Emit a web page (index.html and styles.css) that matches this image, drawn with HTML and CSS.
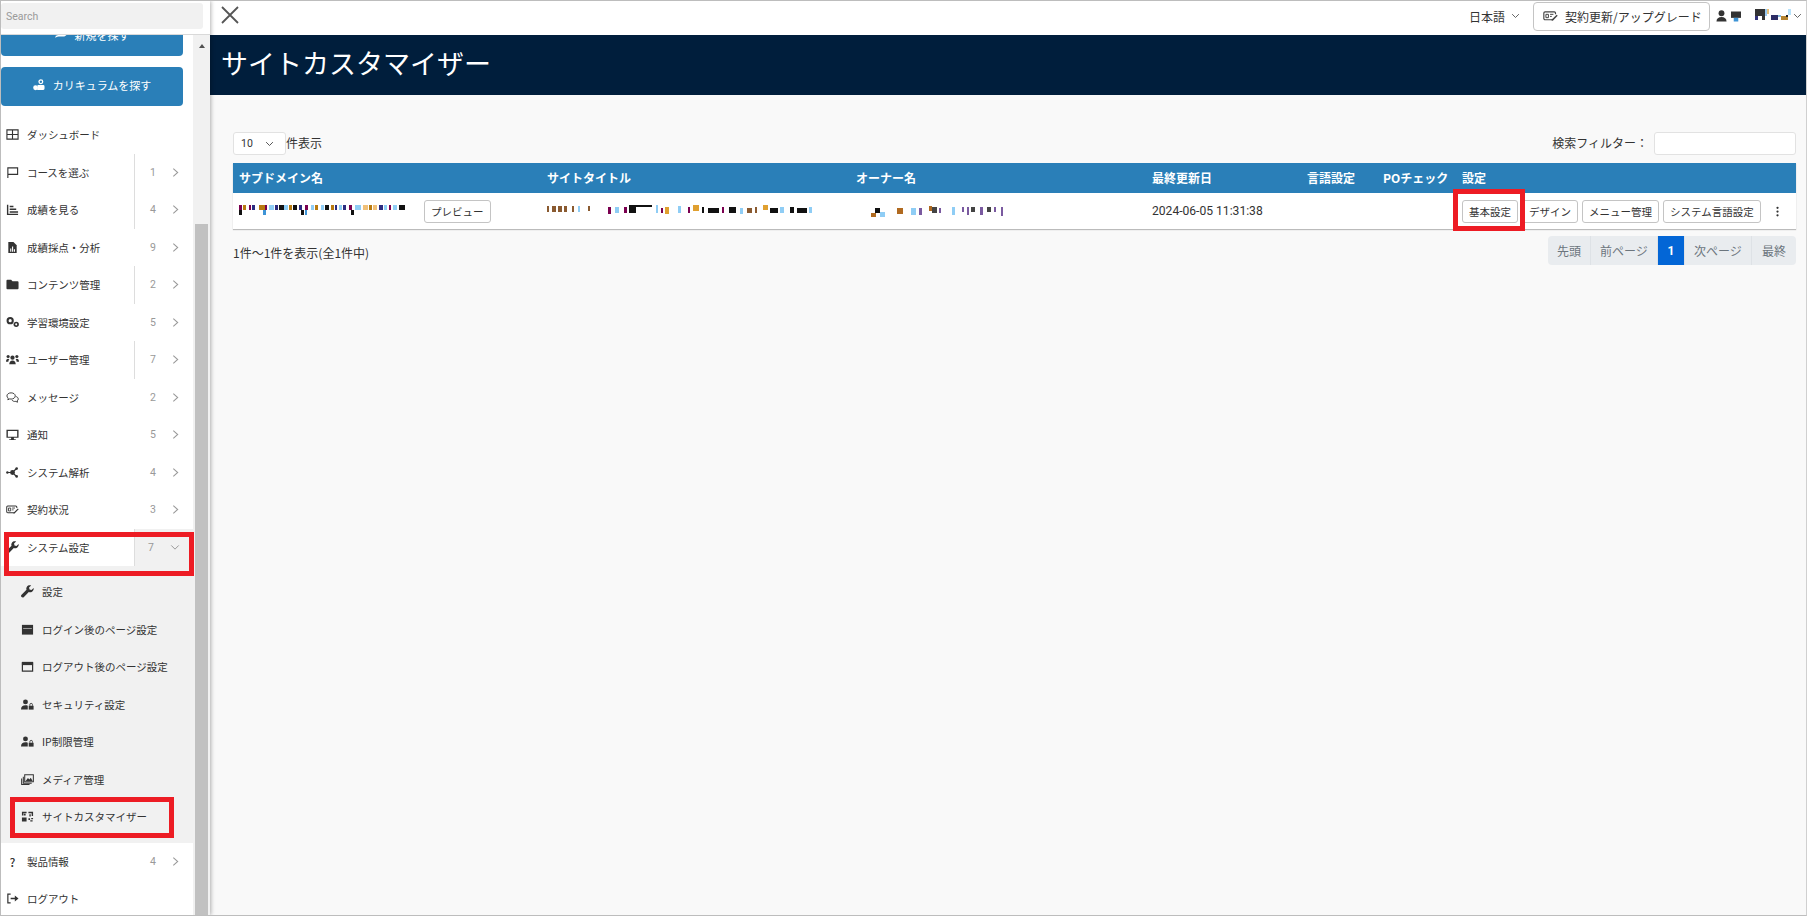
FILE: index.html
```html
<!DOCTYPE html>
<html lang="ja">
<head>
<meta charset="utf-8">
<title>サイトカスタマイザー</title>
<link rel="stylesheet" href="styles.css">
</head>
<body>
<svg class="defs" width="0" height="0" aria-hidden="true">
  <defs>
    <symbol id="i-wrench" viewBox="0 0 16 16"><path fill="currentColor" d="M15.5 3.6l-2.6 2.6-2.4-.6-.6-2.4L12.5.6C10.6-.1 8.400.4 7.300 2c-.9 1.300-1 2.700-.5 3.900L.7 12c-.9.900-.9 2.100 0 2.900.8.800 2 .8 2.900-.1l6-6.100c1.300.6 2.800.4 4-.5 1.600-1.200 2.400-3.100 1.900-4.600z"/></symbol>
    <symbol id="i-ticket" viewBox="0 0 18 14"><path fill="none" stroke="currentColor" stroke-width="1.400" d="M12 11.500H2.500a1.500 1.500 0 0 1-1.500-1.500V3.500A1.500 1.500 0 0 1 2.500 2h11A1.500 1.500 0 0 1 15 3.500V5"/><path fill="none" stroke="currentColor" stroke-width="1.200" d="M3.500 5h3v4h-3zM8.500 5h4M8.500 7.500h2"/><path fill="currentColor" d="M16.400 5.600l1.200 1.200-5.500 5.500-1.800.5.500-1.800z"/></symbol>
    <symbol id="i-userlock" viewBox="0 0 16 13"><circle cx="5.500" cy="3.300" r="3" fill="currentColor"/><path fill="currentColor" d="M0 12.500c0-3.200 2.200-5 5.500-5 1.100 0 2 .2 2.800.6v4.400z"/><path fill="currentColor" d="M9.500 8h6v4.800h-6z"/><path fill="none" stroke="currentColor" stroke-width="1.100" d="M10.900 8V6.700a1.600 1.600 0 0 1 3.200 0V8"/></symbol>
    <symbol id="i-chev" viewBox="0 0 8 12"><path fill="none" stroke="currentColor" stroke-width="1.200" d="M1.500 1.500L6.500 6l-5 4.500"/></symbol>
    <symbol id="i-down" viewBox="0 0 12 8"><path fill="none" stroke="currentColor" stroke-width="1.200" d="M1.500 1.500L6 6l4.500-4.500"/></symbol>
    <symbol id="i-user" viewBox="0 0 12 13"><circle cx="6" cy="3.500" r="3.200" fill="currentColor"/><path fill="currentColor" d="M.5 12.500c0-3.300 2.200-5 5.500-5s5.500 1.700 5.500 5z"/></symbol>
  </defs>
</svg>

<div class="frame">
  <aside class="sidebar">
    <div class="search-head">
      <div class="search-box">Search</div>
    </div>
    <div class="side-body">
      <nav class="side-nav">
        <a class="cta cta-cut"><svg class="cta-icon" viewBox="0 0 16 12"><path fill="currentColor" d="M0 12c0-3 2.500-4 5-4h6c3 0 5-2 5-4H9C7 4 5 6 1 7z"/></svg>新規を探す</a>
        <a class="cta"><svg class="cta-icon" viewBox="0 0 13 13"><circle cx="8.500" cy="3" r="2" fill="none" stroke="currentColor" stroke-width="1.400"/><circle cx="2.800" cy="9.500" r="2.600" fill="currentColor"/><path fill="currentColor" d="M5 6.500h6a1.500 1.500 0 0 1 1.500 1.500v2.200A1.500 1.500 0 0 1 11 11.800H4.500z"/></svg>カリキュラムを探す</a>

        <ul class="menu">
          <li class="item first"><svg class="ic" viewBox="0 0 14 14"><path fill="none" stroke="currentColor" stroke-width="1.200" d="M1 2h12v10H1zM1 7h12M7 2v10"/></svg><span class="label">ダッシュボード</span></li>
          <li class="item rule"><svg class="ic" viewBox="0 0 14 14"><path fill="none" stroke="currentColor" stroke-width="1.200" d="M2 13V2h10.500v7H2"/></svg><span class="label">コースを選ぶ</span><span class="count">1</span><svg class="chev"><use href="#i-chev"/></svg></li>
          <li class="item rule"><svg class="ic" viewBox="0 0 14 14"><path fill="currentColor" d="M1 2h1.500v9.500H13V13H1zM4 3h4v1.600H4zM4 6h7v1.600H4zM4 9h9v1.600H4z"/></svg><span class="label">成績を見る</span><span class="count">4</span><svg class="chev"><use href="#i-chev"/></svg></li>
          <li class="item"><svg class="ic" viewBox="0 0 14 14"><path fill="currentColor" d="M2.500 1H8l3.500 3.500V13h-9z"/><path fill="#fff" d="M4.500 8h1.200v3.500H4.500zM6.500 6h1.200v5.500H6.500zM8.500 9h1.200v2.500H8.500z"/></svg><span class="label">成績採点・分析</span><span class="count">9</span><svg class="chev"><use href="#i-chev"/></svg></li>
          <li class="item rule"><svg class="ic" viewBox="0 0 14 14"><path fill="currentColor" d="M.5 3A1 1 0 0 1 1.500 2h4L7 3.500h5.500a1 1 0 0 1 1 1V11a1 1 0 0 1-1 1h-11a1 1 0 0 1-1-1z"/></svg><span class="label">コンテンツ管理</span><span class="count">2</span><svg class="chev"><use href="#i-chev"/></svg></li>
          <li class="item"><svg class="ic" viewBox="0 0 14 14"><circle cx="4.500" cy="5" r="2.800" fill="none" stroke="currentColor" stroke-width="2.200"/><circle cx="11" cy="9" r="2" fill="none" stroke="currentColor" stroke-width="1.800"/></svg><span class="label">学習環境設定</span><span class="count">5</span><svg class="chev"><use href="#i-chev"/></svg></li>
          <li class="item rule"><svg class="ic" viewBox="0 0 14 14"><circle cx="7" cy="5" r="2.300" fill="currentColor"/><circle cx="2.300" cy="3.800" r="1.700" fill="currentColor"/><circle cx="11.700" cy="3.800" r="1.700" fill="currentColor"/><path fill="currentColor" d="M3.500 12c0-2.500 1.500-4 3.500-4s3.500 1.500 3.500 4zM0 9.500c0-1.900.8-3.200 2.300-3.200.5 0 1 .2 1.300.5-.6.700-1 1.500-1.100 2.700zM14 9.500c0-1.900-.8-3.200-2.300-3.200-.5 0-1 .2-1.300.5.600.7 1 1.500 1.100 2.700z"/></svg><span class="label">ユーザー管理</span><span class="count">7</span><svg class="chev"><use href="#i-chev"/></svg></li>
          <li class="item"><svg class="ic" viewBox="0 0 14 14"><path fill="none" stroke="currentColor" stroke-width="1" d="M5.500 2C3 2 1 3.400 1 5.300c0 1 .6 1.800 1.400 2.400L2 9.500l2-1c.5.100 1 .2 1.500.2 2.500 0 4.500-1.500 4.500-3.400S8 2 5.500 2zM11 6c1.300.5 2.200 1.400 2.200 2.600 0 .8-.4 1.500-1.100 2l.3 1.500-1.800-.9c-1.800.3-3.500-.2-4.200-1.600"/></svg><span class="label">メッセージ</span><span class="count">2</span><svg class="chev"><use href="#i-chev"/></svg></li>
          <li class="item"><svg class="ic" viewBox="0 0 14 14"><path fill="currentColor" d="M.5 2h13v8.500H8.500V12h2v1h-7v-1h2v-1.500H.5zM2 3.300v6h10v-6z"/></svg><span class="label">通知</span><span class="count">5</span><svg class="chev"><use href="#i-chev"/></svg></li>
          <li class="item"><svg class="ic" viewBox="0 0 14 14"><path stroke="currentColor" stroke-width="1.300" d="M2 7h4M7 7l4-4M7 7l4 4"/><circle cx="7" cy="7" r="2.600" fill="currentColor"/><circle cx="1.500" cy="7" r="1.300" fill="currentColor"/><circle cx="11.500" cy="2.800" r="1.400" fill="currentColor"/><circle cx="11.500" cy="11.200" r="1.400" fill="currentColor"/></svg><span class="label">システム解析</span><span class="count">4</span><svg class="chev"><use href="#i-chev"/></svg></li>
          <li class="item"><svg class="ic"><use href="#i-ticket"/></svg><span class="label">契約状況</span><span class="count">3</span><svg class="chev"><use href="#i-chev"/></svg></li>
          <li class="item rule open"><svg class="ic"><use href="#i-wrench"/></svg><span class="label">システム設定</span><span class="count">7</span><svg class="chev-down"><use href="#i-down"/></svg></li>
        </ul>

        <ul class="submenu">
          <li class="sub"><svg class="ic"><use href="#i-wrench"/></svg>設定</li>
          <li class="sub"><svg class="ic" viewBox="0 0 14 14"><path fill="currentColor" d="M1 2h12v10.500H1z"/><path fill="#f1f1f1" d="M2.300 5.500h9.400v.6H2.300z"/></svg>ログイン後のページ設定</li>
          <li class="sub"><svg class="ic" viewBox="0 0 14 14"><path fill="none" stroke="currentColor" stroke-width="1.300" d="M1.500 3h11v9h-11z"/><path fill="currentColor" d="M1 2h12v3.500H1z"/></svg>ログアウト後のページ設定</li>
          <li class="sub"><svg class="ic"><use href="#i-userlock"/></svg>セキュリティ設定</li>
          <li class="sub"><svg class="ic"><use href="#i-userlock"/></svg>IP制限管理</li>
          <li class="sub"><svg class="ic" viewBox="0 0 14 14"><path fill="none" stroke="currentColor" stroke-width="1.100" d="M4 2h9.300v7.500H4zM2.500 4v7h9M.7 6v6.500h8.500"/><path fill="currentColor" d="M5 8.500l2.500-3 1.500 1.500 1.500-2 2 3.500z"/></svg>メディア管理</li>
          <li class="sub"><svg class="ic" viewBox="0 0 14 14"><path fill="currentColor" d="M1 2h5v1.500H2.500V6H1zM8 2h5v4.500h-1.500V3.500H8zM1 8h5v4.500H1zM3 4h2v2H3zM9 4.500h1.500V7H9zM8 9h1.800v1.800H8zM11 8.500h2V10h-2zM10 11h2.500v1.500H10z"/></svg>サイトカスタマイザー</li>
        </ul>

        <ul class="menu">
          <li class="item"><span class="ic ic-text">?</span><span class="label">製品情報</span><span class="count">4</span><svg class="chev"><use href="#i-chev"/></svg></li>
          <li class="item"><svg class="ic" viewBox="0 0 14 14"><path fill="none" stroke="currentColor" stroke-width="1.300" d="M5 2.200H2v9.600h3"/><path fill="currentColor" d="M5 6.200h4.500V3.800L13.500 7l-4 3.200V7.800H5z"/></svg><span class="label">ログアウト</span></li>
        </ul>
      </nav>
      <div class="scrollbar">
        <div class="scroll-up"></div>
        <div class="scroll-thumb"></div>
      </div>
    </div>
  </aside>

  <main class="main">
    <header class="topbar">
      <svg class="close" viewBox="0 0 18 18"><path stroke="currentColor" stroke-width="1.800" d="M1 1l16 16M17 1L1 17"/></svg>
      <div class="top-right">
        <span class="lang">日本語<svg class="lang-down"><use href="#i-down"/></svg></span>
        <a class="upgrade"><svg class="up-icon"><use href="#i-ticket"/></svg>契約更新/アップグレード</a>
        <svg class="user-icon"><use href="#i-user"/></svg>
        <svg class="px px-a" viewBox="0 0 11 11"><rect width="11" height="7" fill="#333"/><rect x="3" y="7" width="5" height="4" fill="#3d94d6"/></svg>
        <svg class="px px-b" viewBox="0 0 36 14"><rect y="0" width="10" height="7" fill="#333"/><rect y="7" width="3" height="4" fill="#33337a"/><rect x="7" y="7" width="3" height="4" fill="#333"/><rect x="10" width="2" height="7" fill="#99c9f0"/><rect x="12" width="2" height="5" fill="#e8c078"/><rect x="16" y="6" width="7" height="5" fill="#2d2d66"/><rect x="23" y="6" width="3" height="2" fill="#88bbdd"/><rect x="26" y="7" width="7" height="4" fill="#b5842f"/><rect x="31" y="6" width="2" height="2" fill="#222"/><rect x="33" width="3" height="6" fill="#b6e2fb"/></svg>
        <svg class="lang-down"><use href="#i-down"/></svg>
      </div>
    </header>

    <div class="page-head"><h1>サイトカスタマイザー</h1></div>

    <section class="content">
      <div class="tools">
        <div class="len"><span class="select">10<svg class="sel-down"><use href="#i-down"/></svg></span><span class="lift">件表示</span></div>
        <div class="filter"><span class="lift">検索フィルター：</span><span class="filter-input"></span></div>
      </div>

      <table class="grid">
        <colgroup>
          <col class="c1"><col class="c2"><col class="c3"><col class="c4"><col class="c5"><col class="c6"><col>
        </colgroup>
        <thead>
          <tr>
            <th>サブドメイン名</th>
            <th class="under">サイトタイトル</th>
            <th class="under">オーナー名</th>
            <th>最終更新日</th>
            <th>言語設定</th>
            <th>POチェック</th>
            <th>設定</th>
          </tr>
        </thead>
        <tbody>
          <tr>
            <td>
              <div class="cell-sub">
                <svg class="noise n1" viewBox="0 0 170 16" preserveAspectRatio="none" shape-rendering="crispEdges">
                  <g fill="#7a0050"><rect x="0" y="2" width="3" height="5"/><rect x="10" y="2" width="2" height="5"/><rect x="26" y="2" width="2" height="5"/><rect x="66" y="2" width="3" height="5"/><rect x="110" y="2" width="3" height="5"/><rect x="150" y="2" width="2" height="5"/></g>
                  <g fill="#b87a10"><rect x="4" y="2" width="3" height="5"/><rect x="20" y="2" width="6" height="5"/><rect x="50" y="2" width="3" height="5"/><rect x="76" y="2" width="3" height="5"/><rect x="92" y="2" width="3" height="5"/><rect x="130" y="2" width="3" height="5"/></g>
                  <g fill="#2b2b80"><rect x="13" y="2" width="3" height="5"/><rect x="36" y="2" width="3" height="5"/><rect x="60" y="2" width="3" height="5"/><rect x="104" y="2" width="3" height="5"/><rect x="140" y="2" width="4" height="5"/><rect x="96" y="2" width="2" height="5"/></g>
                  <g fill="#8fcdf5"><rect x="30" y="2" width="5" height="5"/><rect x="45" y="2" width="4" height="5"/><rect x="72" y="2" width="3" height="5"/><rect x="82" y="2" width="3" height="5"/><rect x="116" y="2" width="6" height="5"/><rect x="145" y="2" width="3" height="5"/><rect x="154" y="2" width="4" height="5"/><rect x="100" y="2" width="3" height="5"/></g>
                  <g fill="#111"><rect x="40" y="2" width="5" height="5"/><rect x="54" y="2" width="4" height="5"/><rect x="86" y="2" width="4" height="5"/><rect x="160" y="2" width="6" height="5"/><rect x="0" y="7" width="3" height="5"/><rect x="62" y="7" width="3" height="5"/><rect x="112" y="7" width="3" height="5"/></g>
                  <g fill="#f0c078"><rect x="124" y="2" width="5" height="5"/><rect x="134" y="2" width="4" height="5"/></g>
                  <g fill="#3d94d6"><rect x="24" y="7" width="3" height="5"/><rect x="66" y="7" width="2" height="5"/></g>
                </svg>
                <span class="btn">プレビュー</span>
              </div>
            </td>
            <td>
              <svg class="noise n2" viewBox="0 0 270 16" preserveAspectRatio="none" shape-rendering="crispEdges">
                <g fill="#8a5a30"><rect x="0" y="3" width="2" height="6"/><rect x="4" y="3" width="4" height="6"/><rect x="10" y="3" width="3" height="6"/><rect x="15" y="3" width="3" height="6"/><rect x="22" y="3" width="2" height="6"/><rect x="36" y="3" width="2" height="5"/><rect x="176" y="5" width="4" height="5"/><rect x="183" y="4" width="2" height="6"/></g>
                <g fill="#111"><rect x="72" y="2" width="6" height="8"/><rect x="78" y="2" width="14" height="2"/><rect x="136" y="4" width="2" height="6"/><rect x="142" y="5" width="9" height="5"/><rect x="160" y="4" width="6" height="6"/><rect x="196" y="5" width="7" height="5"/><rect x="214" y="4" width="3" height="6"/><rect x="220" y="5" width="9" height="5"/></g>
                <g fill="#7a0050"><rect x="54" y="4" width="2" height="7"/><rect x="68" y="4" width="2" height="6"/><rect x="124" y="4" width="2" height="6"/><rect x="100" y="5" width="2" height="5"/><rect x="154" y="4" width="2" height="6"/></g>
                <g fill="#8fcdf5"><rect x="27" y="3" width="2" height="6"/><rect x="60" y="4" width="3" height="6"/><rect x="96" y="2" width="2" height="8"/><rect x="115" y="3" width="3" height="7"/><rect x="170" y="5" width="2" height="6"/><rect x="205" y="4" width="3" height="6"/><rect x="230" y="4" width="3" height="6"/></g>
                <g fill="#e0a030"><rect x="104" y="4" width="3" height="7"/><rect x="128" y="2" width="6" height="6"/><rect x="190" y="2" width="4" height="5"/></g>
              </svg>
            </td>
            <td>
              <svg class="noise n3" viewBox="0 0 140 16" preserveAspectRatio="none" shape-rendering="crispEdges">
                <g fill="#111"><rect x="8" y="5" width="4" height="5"/></g>
                <g fill="#b06a20"><rect x="4" y="10" width="5" height="4"/><rect x="27" y="5" width="5" height="6"/><rect x="55" y="3" width="3" height="5"/></g>
                <g fill="#8fcdf5"><rect x="12" y="9" width="5" height="5"/><rect x="39" y="5" width="5" height="7"/><rect x="75" y="4" width="3" height="8"/></g>
                <g fill="#7a5aa0"><rect x="46" y="5" width="3" height="7"/><rect x="64" y="5" width="2" height="5"/><rect x="84" y="4" width="2" height="5"/><rect x="88" y="4" width="2" height="8"/><rect x="100" y="4" width="2" height="8"/><rect x="112" y="4" width="2" height="5"/><rect x="118" y="4" width="2" height="9"/></g>
                <g fill="#444"><rect x="58" y="4" width="4" height="6"/><rect x="92" y="4" width="3" height="5"/><rect x="106" y="4" width="3" height="5"/></g>
              </svg>
            </td>
            <td class="date">2024-06-05 11:31:38</td>
            <td></td>
            <td></td>
            <td>
              <div class="actions">
                <span class="btn">基本設定</span>
                <span class="btn">デザイン</span>
                <span class="btn">メニュー管理</span>
                <span class="btn">システム言語設定</span>
                <svg class="dots" viewBox="0 0 4 14"><circle cx="2" cy="2" r="1.500" fill="currentColor"/><circle cx="2" cy="7" r="1.500" fill="currentColor"/><circle cx="2" cy="12" r="1.500" fill="currentColor"/></svg>
              </div>
            </td>
          </tr>
        </tbody>
      </table>

      <div class="foot">
        <span class="foot-text">1件～1件を表示(全1件中)</span>
        <div class="pager">
          <span class="pg p-first">先頭</span>
          <span class="pg p-wide">前ページ</span>
          <span class="pg p-active">1</span>
          <span class="pg p-wide">次ページ</span>
          <span class="pg p-last">最終</span>
        </div>
      </div>
    </section>
  </main>

  <div class="mark mark-side"></div>
  <div class="mark mark-sub"></div>
  <div class="mark mark-btn"></div>
</div>
</body>
</html>
```

FILE: styles.css
```css
* { box-sizing: border-box; }
html, body { margin: 0; padding: 0; height: 100%; overflow: hidden; }
body {
  font-family: "Noto Sans CJK JP", "Liberation Sans", sans-serif;
  font-size: 11px;
  color: #333;
  background: #fff;
}
.defs { position: absolute; }
.frame {
  position: relative;
  display: flex;
  width: 1807px;
  height: 916px;
  border: 1px solid #bdbdbd;
  border-right-color: #d0d0d0;
  overflow: hidden;
}

/* Sidebar */
.sidebar {
  flex: 0 0 209px;
  display: flex;
  flex-direction: column;
  background: #fff;
  box-shadow: 1px 0 4px rgba(0,0,0,.3);
  z-index: 2;
}
.search-head {
  flex: 0 0 34px;
  padding: 2px 7px 5px 0;
  background: #fff;
  border-bottom: 1px solid #d9d9d9;
}
.search-box {
  height: 26px;
  line-height: 27px;
  padding-left: 5px;
  background: #f1f1f1;
  border-radius: 3px;
  color: #9a9a9a;
  font-family: "Roboto", "Liberation Sans", sans-serif;
  font-size: 10.5px;
}
.side-body { flex: 1; display: flex; min-height: 0; }
.side-nav { flex: 0 0 192px; overflow: hidden; display: flex; flex-direction: column; }
.cta {
  flex: none;
  display: flex;
  align-items: center;
  justify-content: center;
  gap: 8px;
  width: 182px;
  height: 39px;
  margin: 0 0 11px;
  padding-bottom: 3px;
  background: #2a7fb8;
  border-radius: 4px;
  color: #fff;
  font-size: 11px;
}
.cta-cut { margin-top: -18px; }
.cta-icon { width: 12px; height: 12px; }
.menu, .submenu { list-style: none; margin: 0; padding: 0; flex: none; }
.item {
  position: relative;
  display: flex;
  align-items: center;
  height: 37.500px;
  padding-left: 5px;
}
.first { margin-top: -1px; }
.ic { flex: none; width: 13px; height: 13px; color: #333; margin-right: 8px; }
.ic-text { font-size: 12px; line-height: 13px; text-align: center; font-weight: 500; }
.label { flex: 1; font-size: 10.500px; letter-spacing: -.05px; }
.count { width: 14px; margin-right: 12px; color: #999; text-align: center; font-size: 10.500px; font-family: "Roboto", sans-serif; }
.chev { width: 7px; height: 11px; margin-right: 14px; color: #999; }
.chev-down { width: 10px; height: 7px; margin-right: 13px; color: #999; }
.rule::after {
  content: "";
  position: absolute;
  left: 133px;
  top: 0;
  bottom: 0;
  width: 1px;
  background: #ddd;
}
.open { background: linear-gradient(to right, #fff 133px, #f1f1f1 133px); }
.submenu { background: #f1f1f1; padding: 7px 0 7px; }
.sub {
  display: flex;
  align-items: center;
  height: 37.500px;
  padding-left: 20px;
  font-size: 10.500px;
}
.scrollbar {
  flex: 0 0 17px;
  background: #f1f1f1;
  display: flex;
  flex-direction: column;
  padding-left: 2px;
}
.scroll-up {
  flex: none;
  width: 0;
  height: 0;
  margin: 9px 0 0 4px;
  border-left: 3.500px solid transparent;
  border-right: 3.500px solid transparent;
  border-bottom: 4px solid #505050;
}
.scroll-thumb { flex: 1; width: 13px; margin-top: 176px; background: #c1c1c1; }

/* Main */
.main { flex: 1; min-width: 0; display: flex; flex-direction: column; background: #f9f9f9; }
.topbar {
  flex: 0 0 34px;
  display: flex;
  align-items: flex-start;
  justify-content: space-between;
  padding: 0 4px 0 11px;
  background: #fff;
}
.close { width: 18px; height: 18px; margin-top: 5px; color: #555; }
.top-right { display: flex; align-items: center; height: 30px; }
.lang { display: flex; align-items: center; font-size: 12px; color: #333; }
.lang-down { width: 9px; height: 6px; margin-left: 6px; color: #555; }
.upgrade {
  display: flex;
  align-items: center;
  height: 29px;
  width: 177px;
  margin-left: 13px;
  padding-left: 9px;
  background: #fff;
  border: 1px solid #c4c4c4;
  border-radius: 4px;
  font-size: 12px;
  white-space: nowrap;
}
.up-icon { width: 15px; height: 12px; margin-right: 7px; color: #444; }
.user-icon { width: 11px; height: 12px; margin-left: 6px; color: #333; }
.px-a { width: 10px; height: 11px; margin-left: 4px; }
.px-b { width: 36px; height: 14px; margin-left: 14px; margin-right: -4px; }

.page-head {
  flex: 0 0 60px;
  display: flex;
  align-items: center;
  padding: 0 0 5px 11px;
  background: #001e3c;
  color: #fff;
}
.page-head h1 { margin: 0; font-size: 27px; font-weight: 400; line-height: 1; }

.content { flex: 1; padding: 37px 10px 0 23px; font-size: 12px; }
.tools { display: flex; justify-content: space-between; align-items: center; height: 23px; margin-bottom: 8px; }
.len { display: flex; align-items: center; }
.lift { margin-top: -3px; }
.select {
  display: flex;
  align-items: center;
  justify-content: space-between;
  width: 53px;
  height: 23px;
  padding: 0 11px 0 7px;
  background: #fff;
  border: 1px solid #e2e2e2;
  border-radius: 3px;
  font-family: "Roboto", sans-serif;
  font-size: 10.5px;
}
.sel-down { width: 9px; height: 6px; color: #444; }
.filter { display: flex; align-items: center; gap: 6px; }
.filter-input { width: 142px; height: 23px; background: #fff; border: 1px solid #e2e2e2; border-radius: 3px; }

.grid {
  width: 100%;
  table-layout: fixed;
  border-collapse: collapse;
  background: #fff;
  box-shadow: 0 1px 1px #bbb;
}
.c1 { width: 308px; }
.c2 { width: 309px; }
.c3 { width: 296px; }
.c4 { width: 155px; }
.c5 { width: 76px; }
.c6 { width: 79px; }
.grid th {
  height: 30px;
  padding: 0 0 1px 6px;
  background: #2a7fb8;
  color: #fff;
  font-size: 12px;
  font-weight: 700;
  text-align: left;
}
.grid th.under { border-bottom: 1px solid #fff; }
.grid td { height: 36px; padding: 0 0 0 6px; vertical-align: middle; font-size: 12px; }
.grid td.date { font-family: "Roboto", sans-serif; font-size: 12.100px; }
.cell-sub { display: flex; align-items: center; }
.noise { display: block; }
.n1 { width: 170px; height: 16px; margin-right: 15px; }
.n2 { width: 307px; height: 16px; margin-left: 0; }
.n3 { width: 160px; height: 16px; margin-left: 10px; }
.btn {
  flex: none;
  display: inline-flex;
  align-items: center;
  justify-content: center;
  height: 23px;
  padding: 0 6px;
  background: #fff;
  border: 1px solid #c4c4c4;
  border-radius: 3px;
  font-size: 10.500px;
  white-space: nowrap;
}
.actions { display: flex; align-items: center; gap: 4px; }
.dots { width: 3px; height: 11px; margin-left: 11px; color: #333; }

.foot { display: flex; justify-content: space-between; align-items: flex-start; margin-top: 7px; }
.foot-text { line-height: 29px; padding-top: 2px; }
.pager { display: flex; height: 29px; border-radius: 4px; overflow: hidden; background: #e9ecef; color: #6c757d; font-size: 12px; }
.pg { display: flex; align-items: center; justify-content: center; border-right: 1px solid #dee2e6; }
.pg:last-child { border-right: 0; }
.p-first { width: 43px; }
.p-wide { width: 67px; }
.p-active { width: 27px; background: #0366d6; color: #fff; font-weight: 700; font-family: "Roboto", sans-serif; }
.p-last { width: 44px; }

/* Annotation overlays */
.mark { position: absolute; border: 5px solid #ed1c24; z-index: 5; pointer-events: none; }
.mark-side { left: 3px; top: 531px; width: 190px; height: 44px; }
.mark-sub { left: 9px; top: 796px; width: 164px; height: 41px; }
.mark-btn { left: 1452px; top: 188px; width: 72px; height: 42px; }
```
